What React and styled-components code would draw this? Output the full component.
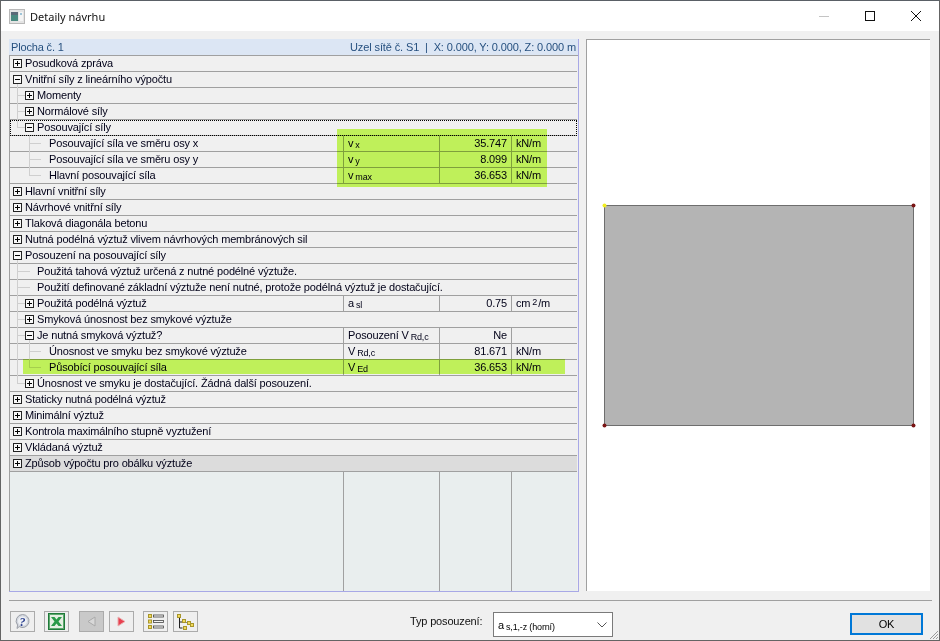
import React from 'react'
import styled, { createGlobalStyle } from 'styled-components'

const GlobalStyle = createGlobalStyle`
  html, body { margin: 0; padding: 0; background: #f0f0f0; }
  body { font-family: "Liberation Sans", Arial, sans-serif; font-size: 11px; letter-spacing: -0.16px; color: #000; }
`

const Win = styled.div`
  width: 940px;
  height: 641px;
  box-sizing: border-box;
  border: 1px solid #646464;
  border-top-color: #5a6066;
  background: #f0f0f0;
  display: flex;
  flex-direction: column;
  position: relative;
  overflow: hidden;
`

const TitleBar = styled.div`
  height: 30px;
  flex: none;
  background: #fff;
  display: flex;
  align-items: center;
  padding-left: 8px;
`

const Title = styled.div`
  font-family: "Noto Sans", sans-serif;
  font-size: 11px;
  letter-spacing: 0;
  margin-left: 5px;
  color: #111;
  flex: 1;
`

const WinButton = styled.div`
  width: 46px;
  height: 30px;
  display: flex;
  align-items: center;
  justify-content: center;
`

const Main = styled.div`
  flex: none;
  height: 553px;
  display: flex;
  padding: 8px 8px 0 8px;
  gap: 7px;
`

const Panel = styled.div`
  width: 570px;
  height: 553px;
  box-sizing: border-box;
  flex: none;
  position: relative;
  display: flex;
  flex-direction: column;
  border-right: 1px solid #a8a8e6;
  border-bottom: 1px solid #a8a8e6;
`

const PanelHead = styled.div`
  height: 16px;
  flex: none;
  box-sizing: border-box;
  background: #dce6f4;
  display: flex;
  justify-content: space-between;
  align-items: center;
  padding: 0 2px 0 2px;
  color: #26507f;
  line-height: 16px;
`

const NodeInfo = styled.span`
  letter-spacing: -0.12px;
`

const Body = styled.div`
  flex: 1;
  display: flex;
  flex-direction: column;
  border-left: 1px solid #a0a0a0;
  border-top: 1px solid #a0a0a0;
  padding-right: 1px;
  min-height: 0;
`

const Row = styled.div`
  height: 16px;
  box-sizing: border-box;
  flex: none;
  display: flex;
  position: relative;
  border-bottom: 1px solid #a0a0a0;
  background: ${p => (p.$shade ? '#dcdcdc' : '#f0f0f0')};
  outline: ${p => (p.$focus ? '1px dotted #000' : 'none')};
  outline-offset: -1px;
`

const TreeCell = styled.div`
  flex: ${p => (p.$wide ? '1' : '0 0 333px')};
  display: flex;
  align-items: center;
  padding-left: ${p => p.$pad}px;
  box-sizing: border-box;
  white-space: nowrap;
  line-height: 15px;
  color: #000018;
`

const Expander = styled.span`
  width: 9px;
  height: 9px;
  box-sizing: border-box;
  border: 1px solid #222;
  margin-right: 3px;
  flex: none;
  position: relative;
  background: #f8f8f8;
  &::before {
    content: '';
    position: absolute;
    left: 1px;
    right: 1px;
    top: 3px;
    height: 1px;
    background: #000;
  }
  &::after {
    content: '';
    display: ${p => (p.$open ? 'none' : 'block')};
    position: absolute;
    top: 1px;
    bottom: 1px;
    left: 3px;
    width: 1px;
    background: #000;
  }
`

const Stem = styled.i`
  position: absolute;
  left: ${p => p.$x}px;
  top: ${p => (p.$low ? 8 : 0)}px;
  width: 1px;
  height: ${p => (p.$half ? 8 : 16)}px;
  background: #cfcfcf;
`

const Branch = styled.i`
  position: absolute;
  left: ${p => p.$x}px;
  top: 7px;
  width: ${p => p.$w}px;
  height: 1px;
  background: #cfcfcf;
`

const Cell = styled.div`
  flex: none;
  width: ${p => p.$w}px;
  box-sizing: border-box;
  border-left: 1px solid #a0a0a0;
  padding: 0 4px;
  text-align: ${p => (p.$right ? 'right' : 'left')};
  line-height: 15px;
  white-space: nowrap;
  color: #000018;
`

const Sub = styled.span`
  font-size: 9px;
  margin-left: 2px;
  position: relative;
  top: 1px;
`

const Sup = styled.span`
  font-size: 9px;
  margin: 0 1px 0 2px;
  position: relative;
  top: -2px;
`

const EmptyArea = styled.div`
  flex: 1;
  background: #e9eeee;
  display: flex;
`

const EmptyCol = styled.div`
  flex: ${p => (p.$w ? `0 0 ${p.$w}px` : '1')};
  box-sizing: border-box;
  border-left: ${p => (p.$first ? 'none' : '1px solid #a0a0a0')};
`

const Highlight = styled.div`
  position: absolute;
  left: ${p => p.$x}px;
  top: ${p => p.$y}px;
  width: ${p => p.$w}px;
  height: ${p => p.$h}px;
  background: #cbff5f;
  mix-blend-mode: multiply;
  pointer-events: none;
`

const Preview = styled.div`
  flex: none;
  width: 344px;
  height: 552px;
  box-sizing: border-box;
  background: #fff;
  border-top: 1px solid #a0a0a0;
  border-left: 1px solid #a0a0a0;
`

const Footer = styled.div`
  flex: 1;
  margin: 8px 7px 0 8px;
  border-top: 1px solid #a0a0a0;
  padding-top: 10px;
  padding-left: 1px;
  display: flex;
  align-items: flex-start;
`

const Tool = styled.div`
  width: 25px;
  height: 21px;
  box-sizing: border-box;
  border: 1px solid #ababab;
  background: ${p => (p.$off ? '#c9c9c9' : '#efefef')};
  margin-left: ${p => p.$gap}px;
  display: flex;
  align-items: center;
  justify-content: center;
  flex: none;
`

const TypeLabel = styled.div`
  margin-left: 212px;
  margin-top: 3px;
  width: 83px;
  color: #111;
  line-height: 15px;
`

const Combo = styled.div`
  width: 120px;
  height: 25px;
  box-sizing: border-box;
  margin-top: 1px;
  border: 1px solid #7a7a7a;
  background: #fff;
  display: flex;
  align-items: center;
  justify-content: space-between;
  padding: 0 5px 0 4px;
  flex: none;
`

const OkButton = styled.div`
  margin-left: 237px;
  margin-top: 2px;
  width: 73px;
  height: 22px;
  box-sizing: border-box;
  border: 2px solid #0078d7;
  background: #e1e1e1;
  display: flex;
  align-items: center;
  justify-content: center;
  flex: none;
`

const Grip = styled.svg`
  position: absolute;
  right: 0;
  bottom: 0;
`

// level 0/1 rows have the box, level 1/2 leaves just a branch
const rows = [
  { pad: 3, box: 'closed', text: 'Posudková zpráva' },
  { pad: 3, box: 'open', text: 'Vnitřní síly z lineárního výpočtu', stems: [[7, 'low']] },
  { pad: 15, box: 'closed', text: 'Momenty', stems: [[7]], branch: [7, 8] },
  { pad: 15, box: 'closed', text: 'Normálové síly', stems: [[7]], branch: [7, 8] },
  { pad: 15, box: 'open', text: 'Posouvající síly', stems: [[7, 'half']], branch: [7, 8], focus: true },
  { pad: 39, text: 'Posouvající síla ve směru osy x', stems: [[19]], branch: [19, 12], sym: 'v', sub: 'x', value: '35.747', unit: 'kN/m' },
  { pad: 39, text: 'Posouvající síla ve směru osy y', stems: [[19]], branch: [19, 12], sym: 'v', sub: 'y', value: '8.099', unit: 'kN/m' },
  { pad: 39, text: 'Hlavní posouvající síla', stems: [[19, 'half']], branch: [19, 12], sym: 'v', sub: 'max', value: '36.653', unit: 'kN/m' },
  { pad: 3, box: 'closed', text: 'Hlavní vnitřní síly' },
  { pad: 3, box: 'closed', text: 'Návrhové vnitřní síly' },
  { pad: 3, box: 'closed', text: 'Tlaková diagonála betonu' },
  { pad: 3, box: 'closed', text: 'Nutná podélná výztuž vlivem návrhových membránových sil' },
  { pad: 3, box: 'open', text: 'Posouzení na posouvající síly', stems: [[7, 'low']] },
  { pad: 27, text: 'Použitá tahová výztuž určená z nutné podélné výztuže.', stems: [[7]], branch: [7, 13] },
  { pad: 27, text: 'Použití definované základní výztuže není nutné, protože podélná výztuž je dostačující.', stems: [[7]], branch: [7, 13] },
  { pad: 15, box: 'closed', text: 'Použitá podélná výztuž', stems: [[7]], branch: [7, 8], sym: 'a', sub: 'sl', value: '0.75', unit: 'cm', sup: '2', unitEnd: '/m' },
  { pad: 15, box: 'closed', text: 'Smyková únosnost bez smykové výztuže', stems: [[7]], branch: [7, 8] },
  { pad: 15, box: 'open', text: 'Je nutná smyková výztuž?', stems: [[7], [19, 'low']], branch: [7, 8], sym: 'Posouzení V', sub: 'Rd,c', value: 'Ne' },
  { pad: 39, text: 'Únosnost ve smyku bez smykové výztuže', stems: [[7], [19]], branch: [19, 12], sym: 'V', sub: 'Rd,c', value: '81.671', unit: 'kN/m' },
  { pad: 39, text: 'Působící posouvající síla', stems: [[7], [19, 'half']], branch: [19, 12], sym: 'V', sub: 'Ed', value: '36.653', unit: 'kN/m' },
  { pad: 15, box: 'closed', text: 'Únosnost ve smyku je dostačující. Žádná další posouzení.', stems: [[7, 'half']], branch: [7, 8] },
  { pad: 3, box: 'closed', text: 'Staticky nutná podélná výztuž' },
  { pad: 3, box: 'closed', text: 'Minimální výztuž' },
  { pad: 3, box: 'closed', text: 'Kontrola maximálního stupně vyztužení' },
  { pad: 3, box: 'closed', text: 'Vkládaná výztuž' },
  { pad: 3, box: 'closed', text: 'Způsob výpočtu pro obálku výztuže', shade: true },
]

function AppIcon() {
  return (
    <svg width="16" height="15" viewBox="0 0 16 15">
      <rect x="0.5" y="0.5" width="15" height="14" fill="#e4e4e4" stroke="#b8b8b8" />
      <rect x="2" y="3" width="7" height="9" fill="#4a8a80" />
      <rect x="2" y="3" width="7" height="3" fill="#5b6a78" />
      <rect x="10" y="3" width="4" height="9" fill="#f4f4f4" />
      <rect x="11" y="4" width="2" height="2" fill="#9ec4d8" />
    </svg>
  )
}

function HelpIcon() {
  return (
    <svg width="17" height="17" viewBox="0 0 17 17">
      <path d="M8.500 1.500a6.500 6.500 0 1 1-3.300 12.100L3 15.500l.6-3.400A6.500 6.500 0 0 1 8.500 1.500z" fill="#d4d8e0" stroke="#9a9ea6" />
      <circle cx="8.500" cy="8" r="4.500" fill="#eef0f4" />
      <text x="8.500" y="12.500" textAnchor="middle" fontFamily="Liberation Serif, serif" fontWeight="700" fontStyle="italic" fontSize="12" fill="#2a3f8f">?</text>
    </svg>
  )
}

function ExcelIcon() {
  return (
    <svg width="17" height="17" viewBox="0 0 17 17">
      <rect x="0.500" y="0.500" width="16" height="16" fill="#e4efe2" stroke="#1f7a3a" />
      <rect x="1.500" y="1.500" width="14" height="14" fill="none" stroke="#5fa86e" />
      <path d="M3 4h3.500l2 2.500L10.500 4H14l-3.500 4.500L14 13h-3.500l-2-2.500-2 2.500H3l3.500-4.500z" fill="#2a9a48" />
    </svg>
  )
}

function ArrowIcon({ dir, fill, edge }) {
  const d = dir === 'left' ? 'M3 5.500L10 1v9z' : 'M10 5.500L3 1v9z'
  return (
    <svg width="13" height="11" viewBox="0 0 13 11">
      <path d={d} fill={fill} stroke={edge} />
    </svg>
  )
}

function ListIcon() {
  return (
    <svg width="16" height="15" viewBox="0 0 16 15">
      {[0, 5.5, 11].map(y => (
        <g key={y}>
          <rect x="0.500" y={y + 0.5} width="3" height="3" fill="#f2d95a" stroke="#a8962c" />
          <rect x="5.500" y={y + 1} width="10" height="2" fill="#f4f4f4" stroke="#444" strokeWidth="0.8" />
        </g>
      ))}
    </svg>
  )
}

function TreeIcon() {
  return (
    <svg width="19" height="16" viewBox="0 0 19 16">
      <path d="M3.500 3v11h3M3.500 8h5M10 9v-1M12 10h3" fill="none" stroke="#222" />
      {[[1, 0], [6, 5], [11, 7], [14, 9], [7, 12]].map(([x, y]) => (
        <rect key={x} x={x + 0.5} y={y + 0.5} width="3" height="3" fill="#f2d95a" stroke="#a8962c" />
      ))}
    </svg>
  )
}

function DesignRow({ row }) {
  const hasCells = !!row.sym
  return (
    <Row $shade={row.shade} $focus={row.focus}>
      {row.stems && row.stems.map(([x, mode]) => (
        <Stem key={x} $x={x} $low={mode === 'low'} $half={!!mode} />
      ))}
      {row.branch && <Branch $x={row.branch[0]} $w={row.branch[1]} />}
      <TreeCell $wide={!hasCells} $pad={row.pad}>
        {row.box && <Expander $open={row.box === 'open'} />}
        {row.text}
      </TreeCell>
      {hasCells && (
        <>
          <Cell $w={96}>{row.sym}<Sub>{row.sub}</Sub></Cell>
          <Cell $w={72} $right>{row.value}</Cell>
          <Cell $w={67}>
            {row.unit}
            {row.sup && <Sup>{row.sup}</Sup>}
            {row.unitEnd}
          </Cell>
        </>
      )}
    </Row>
  )
}

export default function App() {
  return (
    <>
      <GlobalStyle />
      <Win>
        <TitleBar>
          <AppIcon />
          <Title>Detaily návrhu</Title>
          <WinButton>
            <svg width="10" height="10" viewBox="0 0 10 10"><path d="M0 5.500h10" stroke="#c4c4c4" /></svg>
          </WinButton>
          <WinButton>
            <svg width="10" height="10" viewBox="0 0 10 10"><rect x="0.500" y="0.500" width="9" height="9" fill="none" stroke="#111" /></svg>
          </WinButton>
          <WinButton>
            <svg width="10" height="10" viewBox="0 0 10 10"><path d="M0 0l10 10M10 0L0 10" stroke="#111" /></svg>
          </WinButton>
        </TitleBar>
        <Main>
          <Panel>
            <PanelHead>
              <span>Plocha č. 1</span>
              <NodeInfo>Uzel sítě č. S1 &nbsp;|&nbsp; X: 0.000, Y: 0.000, Z: 0.000 m</NodeInfo>
            </PanelHead>
            <Body>
              {rows.map(row => <DesignRow key={row.text} row={row} />)}
              <EmptyArea>
                <EmptyCol $w={333} $first />
                <EmptyCol $w={96} />
                <EmptyCol $w={72} />
                <EmptyCol />
              </EmptyArea>
            </Body>
            <Highlight $x={328} $y={90} $w={210} $h={58} />
            <Highlight $x={14} $y={320} $w={542} $h={15} />
          </Panel>
          <Preview>
            <svg width="343" height="551" viewBox="0 0 343 551">
              <rect x="17.500" y="165.500" width="309" height="220" fill="#b4b4b4" stroke="#6e6e6e" />
              <circle cx="17.500" cy="165.500" r="2" fill="#f2ee20" />
              <circle cx="326.500" cy="165.500" r="2" fill="#7a1414" />
              <circle cx="17.500" cy="385.500" r="2" fill="#7a1414" />
              <circle cx="326.500" cy="385.500" r="2" fill="#7a1414" />
            </svg>
          </Preview>
        </Main>
        <Footer>
          <Tool $gap={0}><HelpIcon /></Tool>
          <Tool $gap={9}><ExcelIcon /></Tool>
          <Tool $gap={10} $off><ArrowIcon dir="left" fill="#d8d8d8" edge="#aaa" /></Tool>
          <Tool $gap={5}><ArrowIcon dir="right" fill="#e84050" edge="#e8b0b0" /></Tool>
          <Tool $gap={9}><ListIcon /></Tool>
          <Tool $gap={5}><TreeIcon /></Tool>
          <TypeLabel>Typ posouzení:</TypeLabel>
          <Combo>
            <span>a<Sub>s,1,-z (horní)</Sub></span>
            <svg width="10" height="6" viewBox="0 0 10 6"><path d="M0.500 0.500L5 5l4.500-4.500" fill="none" stroke="#555" /></svg>
          </Combo>
          <OkButton>OK</OkButton>
        </Footer>
        <Grip width="12" height="12" viewBox="0 0 12 12">
          <path d="M11 3L3 11M11 6L6 11M11 9L9 11" stroke="#9a9a9a" />
        </Grip>
      </Win>
    </>
  )
}
